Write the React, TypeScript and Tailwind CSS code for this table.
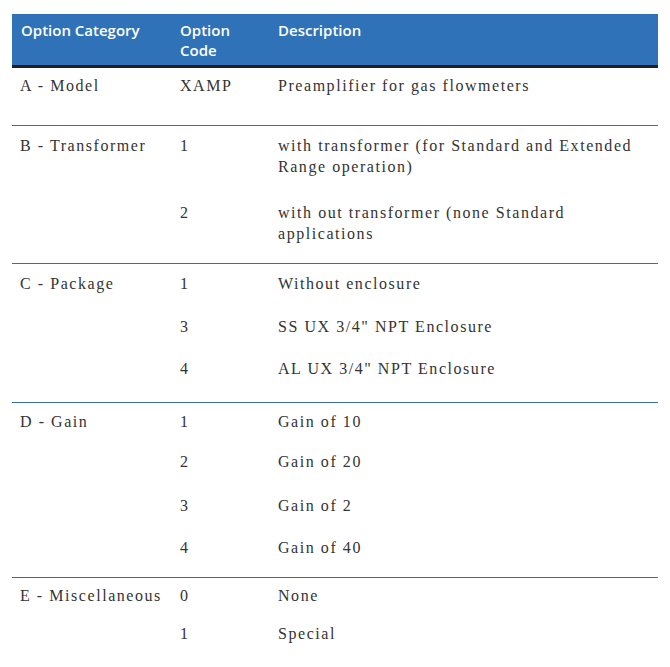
import React from "react";

type Sub = { code: string; desc: string[]; mt: string };
type Group = { cat: string; pt: string; pb: string; subs: Sub[] };

const groups: Group[] = [
  {
    cat: "A - Model",
    pt: "pt-[7px]",
    pb: "pb-[29px]",
    subs: [{ code: "XAMP", desc: ["Preamplifier for gas flowmeters"], mt: "mt-0" }],
  },
  {
    cat: "B - Transformer",
    pt: "pt-[9px]",
    pb: "pb-[19px]",
    subs: [
      { code: "1", desc: ["with transformer (for Standard and Extended", "Range operation)"], mt: "mt-0" },
      { code: "2", desc: ["with out transformer (none Standard", "applications"], mt: "mt-[25px]" },
    ],
  },
  {
    cat: "C - Package",
    pt: "pt-[9px]",
    pb: "pb-[23px]",
    subs: [
      { code: "1", desc: ["Without enclosure"], mt: "mt-0" },
      { code: "3", desc: ['SS UX 3/4" NPT Enclosure'], mt: "mt-[22px]" },
      { code: "4", desc: ['AL UX 3/4" NPT Enclosure'], mt: "mt-[21px]" },
    ],
  },
  {
    cat: "D - Gain",
    pt: "pt-[8px]",
    pb: "pb-[19px]",
    subs: [
      { code: "1", desc: ["Gain of 10"], mt: "mt-0" },
      { code: "2", desc: ["Gain of 20"], mt: "mt-[19px]" },
      { code: "3", desc: ["Gain of 2"], mt: "mt-[23px]" },
      { code: "4", desc: ["Gain of 40"], mt: "mt-[21px]" },
    ],
  },
  {
    cat: "E - Miscellaneous",
    pt: "pt-[7px]",
    pb: "pb-[23px]",
    subs: [
      { code: "0", desc: ["None"], mt: "mt-0" },
      { code: "1", desc: ["Special"], mt: "mt-[17px]" },
    ],
  },
];

const body =
  "font-['Liberation_Serif',serif] text-[16px] leading-[21px] tracking-[1.55px] text-[#333333]";

export default function App() {
  return (
    <div className="w-[670px] h-[667px] bg-white overflow-hidden pt-[14px]">
      <div className="ml-[12px] w-[646px]">
        <div className="bg-[#2f72b8] h-[54px] pt-[6px] flex text-white font-['Open_Sans',sans-serif] font-semibold text-[15px] leading-[20px] border-b-[3px] border-[#231f20]">
          <div className="w-[168px] pl-[9px]">Option Category</div>
          <div className="w-[98px]">
            Option
            <br />
            Code
          </div>
          <div>Description</div>
        </div>
        {groups.map((g, gi) => (
          <div
            key={gi}
            className={`flex ${g.pt} ${g.pb} ${gi > 0 ? "border-t border-[#3a6ca5]" : ""} ${body}`}
          >
            <div className="w-[168px] pl-[8px] whitespace-nowrap">{g.cat}</div>
            <div className="flex-1">
              {g.subs.map((s, si) => (
                <div key={si} className={`flex ${s.mt}`}>
                  <div className="w-[98px]">{s.code}</div>
                  <div className="flex-1">
                    {s.desc.map((d, di) => (
                      <div key={di} className="whitespace-nowrap">
                        {d}
                      </div>
                    ))}
                  </div>
                </div>
              ))}
            </div>
          </div>
        ))}
      </div>
    </div>
  );
}
